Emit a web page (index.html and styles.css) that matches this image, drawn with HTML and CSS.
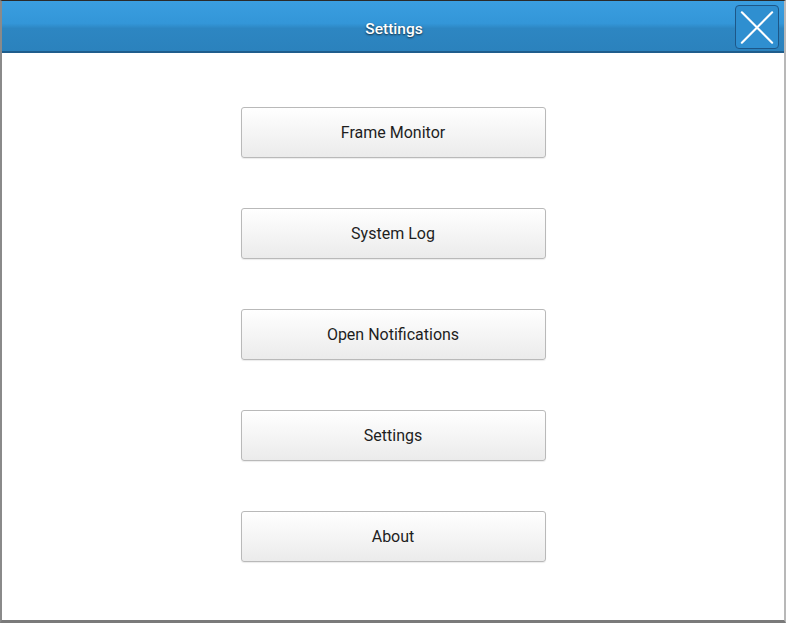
FILE: index.html
```html
<!DOCTYPE html>
<html>
<head>
<meta charset="utf-8">
<link rel="stylesheet" href="styles.css">
</head>
<body>
<div class="window">
  <header class="titlebar">
    <span class="title">Settings</span>
    <button class="close" aria-label="Close">
      <svg width="43" height="43" viewBox="0 0 43 43">
        <path d="M6 6 L37 37 M37 6 L6 37" stroke="#fff" stroke-width="2.2" stroke-linecap="round" fill="none"/>
      </svg>
    </button>
  </header>
  <main class="content">
    <button class="menu-btn">Frame Monitor</button>
    <button class="menu-btn">System Log</button>
    <button class="menu-btn">Open Notifications</button>
    <button class="menu-btn">Settings</button>
    <button class="menu-btn">About</button>
  </main>
</div>
</body>
</html>
```

FILE: styles.css
```css
html, body {
  margin: 0;
  padding: 0;
  width: 786px;
  height: 623px;
  overflow: hidden;
  background: #fff;
  font-family: Roboto, "Liberation Sans", sans-serif;
}
.window {
  box-sizing: border-box;
  width: 786px;
  height: 623px;
  border-top: 1px solid #2a2a2a;
  border-left: 2px solid #8a8a8a;
  border-right: 2px solid #b8b8b8;
  border-bottom: 3px solid #7a7a7a;
  display: flex;
  flex-direction: column;
  background: #fff;
}
.titlebar {
  box-sizing: border-box;
  height: 52px;
  flex: none;
  background: linear-gradient(to bottom, #3a9ee0 0%, #3396d8 45%, #2d86c2 55%, #2b82bd 100%);
  border-bottom: 2px solid #1f5d8c;
  display: flex;
  align-items: center;
  justify-content: center;
  position: relative;
  padding-top: 5px;
}
.title {
  color: #fff;
  font-size: 15.5px;
  font-weight: 500;
  text-shadow: 0 1px 2px rgba(0,0,0,0.7);
  margin-left: 2px;
}
.close {
  position: absolute;
  right: 5px;
  top: 4px;
  width: 44px;
  height: 44px;
  padding: 0;
  box-sizing: border-box;
  border: 1.5px solid #1d5788;
  border-radius: 4px;
  background: #2f8fd0;
  display: flex;
  align-items: center;
  justify-content: center;
}
.content {
  flex: 1;
  display: flex;
  flex-direction: column;
  align-items: center;
  gap: 50px;
  padding-top: 54px;
}
.menu-btn {
  width: 305px;
  height: 51px;
  box-sizing: border-box;
  border: 1px solid #b9b9b9;
  border-radius: 3px;
  background: linear-gradient(to bottom, #ffffff 0%, #f3f3f3 60%, #ebebeb 100%);
  box-shadow: 0 1px 1px rgba(0,0,0,0.08);
  font-family: Roboto, "Liberation Sans", sans-serif;
  font-size: 16px;
  color: #1e1e1e;
  padding: 0;
}
```
